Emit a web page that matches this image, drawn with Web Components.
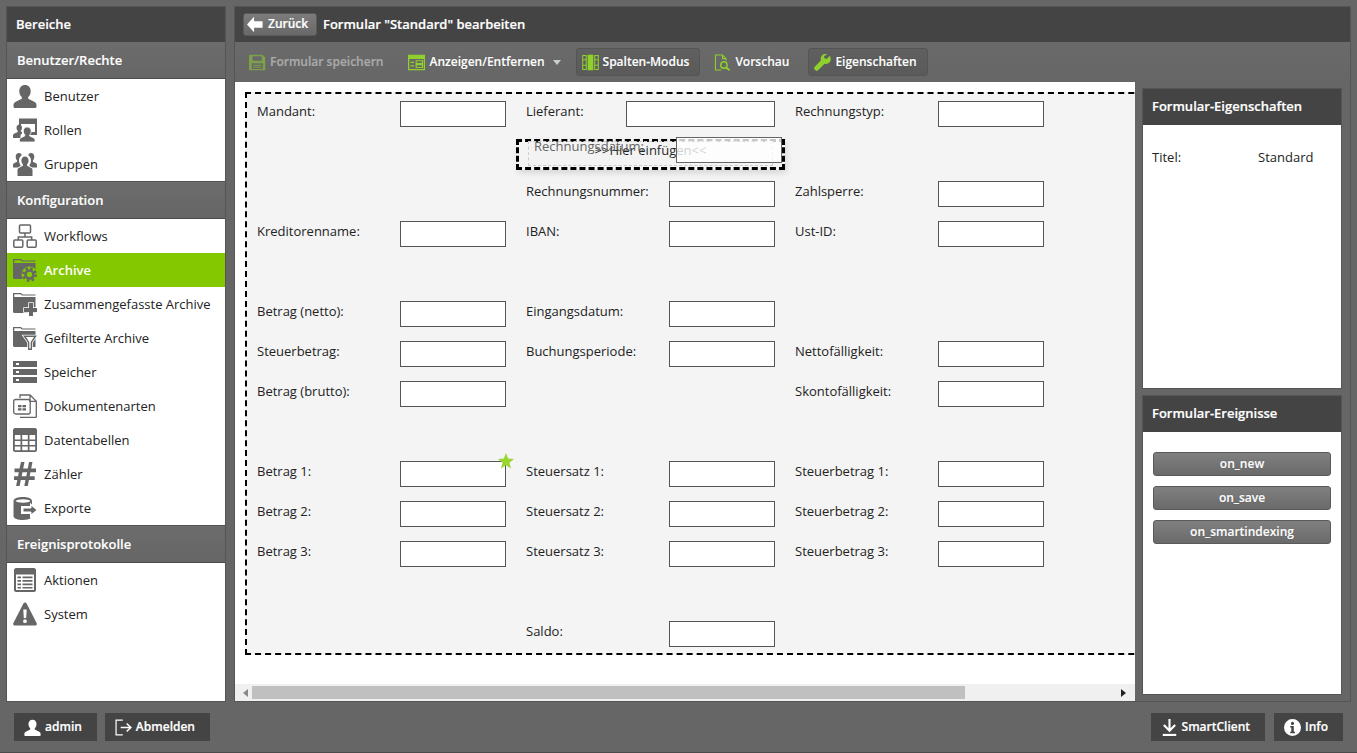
<!DOCTYPE html>
<html lang="de">
<head>
<meta charset="utf-8">
<title>Formular bearbeiten</title>
<style>
html,body{margin:0;height:100%;overflow:hidden;background:#666;font:13px/18px "Open Sans","Liberation Sans",sans-serif;color:#222}
</style>
</head>
<body>
<app-shell>
  <side-nav slot="nav">
    <nav-section title="Benutzer/Rechte">
      <nav-item icon="user">Benutzer</nav-item>
      <nav-item icon="roles">Rollen</nav-item>
      <nav-item icon="groups">Gruppen</nav-item>
    </nav-section>
    <nav-section title="Konfiguration">
      <nav-item icon="workflow">Workflows</nav-item>
      <nav-item icon="foldergear" active>Archive</nav-item>
      <nav-item icon="folderplus">Zusammengefasste Archive</nav-item>
      <nav-item icon="folderfilter">Gefilterte Archive</nav-item>
      <nav-item icon="storage">Speicher</nav-item>
      <nav-item icon="doctypes">Dokumentenarten</nav-item>
      <nav-item icon="table">Datentabellen</nav-item>
      <nav-item icon="hash">Zähler</nav-item>
      <nav-item icon="export">Exporte</nav-item>
    </nav-section>
    <nav-section title="Ereignisprotokolle" grow>
      <nav-item icon="list">Aktionen</nav-item>
      <nav-item icon="warning">System</nav-item>
    </nav-section>
  </side-nav>

  <title-bar slot="title">Formular "Standard" bearbeiten</title-bar>

  <tool-bar slot="tools">
    <tool-button icon="save" disabled>Formular speichern</tool-button>
    <tool-button icon="showhide" caret>Anzeigen/Entfernen</tool-button>
    <tool-button icon="columns" pressed>Spalten-Modus</tool-button>
    <tool-button icon="preview">Vorschau</tool-button>
    <tool-button icon="wrench" pressed>Eigenschaften</tool-button>
  </tool-bar>

  <scroll-canvas slot="canvas">
    <form-grid>
      <form-field col="1" row="1" label="Mandant:"></form-field>
      <form-field col="2" row="1" label="Lieferant:" wide></form-field>
      <form-field col="3" row="1" label="Rechnungstyp:"></form-field>
      <drop-zone col="2" row="2"></drop-zone>
      <form-field col="2" row="3" label="Rechnungsnummer:"></form-field>
      <form-field col="3" row="3" label="Zahlsperre:"></form-field>
      <form-field col="1" row="4" label="Kreditorenname:"></form-field>
      <form-field col="2" row="4" label="IBAN:"></form-field>
      <form-field col="3" row="4" label="Ust-ID:"></form-field>
      <form-field col="1" row="6" label="Betrag (netto):"></form-field>
      <form-field col="2" row="6" label="Eingangsdatum:"></form-field>
      <form-field col="1" row="7" label="Steuerbetrag:"></form-field>
      <form-field col="2" row="7" label="Buchungsperiode:"></form-field>
      <form-field col="3" row="7" label="Nettofälligkeit:"></form-field>
      <form-field col="1" row="8" label="Betrag (brutto):"></form-field>
      <form-field col="3" row="8" label="Skontofälligkeit:"></form-field>
      <form-field col="1" row="10" label="Betrag 1:" star></form-field>
      <form-field col="2" row="10" label="Steuersatz 1:"></form-field>
      <form-field col="3" row="10" label="Steuerbetrag 1:"></form-field>
      <form-field col="1" row="11" label="Betrag 2:"></form-field>
      <form-field col="2" row="11" label="Steuersatz 2:"></form-field>
      <form-field col="3" row="11" label="Steuerbetrag 2:"></form-field>
      <form-field col="1" row="12" label="Betrag 3:"></form-field>
      <form-field col="2" row="12" label="Steuersatz 3:"></form-field>
      <form-field col="3" row="12" label="Steuerbetrag 3:"></form-field>
      <form-field col="2" row="14" label="Saldo:"></form-field>
    </form-grid>
  </scroll-canvas>

  <side-panel slot="props" title="Formular-Eigenschaften">
    <prop-row name="Titel:" value="Standard"></prop-row>
  </side-panel>
  <side-panel slot="props" title="Formular-Ereignisse" buttons>
    <event-button>on_new</event-button>
    <event-button>on_save</event-button>
    <event-button>on_smartindexing</event-button>
  </side-panel>

  <foot-button slot="footl" icon="user">admin</foot-button>
  <foot-button slot="footl" icon="logout">Abmelden</foot-button>
  <foot-button slot="footr" icon="download">SmartClient</foot-button>
  <foot-button slot="footr" icon="info">Info</foot-button>
</app-shell>

<script>
const FOLDER = '<path d="M0 1h8l1.500 1.500H22.500v1H9L7.500 2.200H1.300V5h21.200v16H1.500C.6 21 0 20.400 0 19.500z"/>';
const ICONS = {
  user:'<path d="M12 1C8.400 1 6.300 3.700 6.300 7.200c0 2.500 1 4.600 2.500 5.900v1.700l-5.600 2.700C1.400 18.400.5 19.500.5 21v1.500C.5 23.400 1 24 2 24h20c1 0 1.500-.6 1.500-1.500V21c0-1.500-.9-2.600-2.700-3.500l-5.600-2.700v-1.700c1.500-1.300 2.500-3.400 2.500-5.900C17.700 3.700 15.600 1 12 1z"/>',
  roles:'<path d="M6 .5h18V17h-7.500l-1-1.500V14H22V6H8v2H6z"/><path d="M16 7.500h2.500v2H16zM19.500 7.500H22v2h-2.500zM16 10.500h2.500v2H16zM19.500 10.500H22v2h-2.500z" fill="#fff"/><path d="M6.500 6.500c-2 0-3 1.500-3 3.300 0 1.300.5 2.400 1.200 3v1.200L1 15.700C.3 16 0 16.600 0 17.300V20h7.500v-2.200c0-1 .6-1.800 1.500-2.300V14l-1.200-.5v-.7c.7-.6 1.200-1.700 1.200-3 0-1.800-1-3.300-2.500-3.300z"/><path d="M14 9c-2.300 0-3.700 1.800-3.700 4 0 1.500.6 2.900 1.500 3.700v1.200l-3.700 1.800c-1 .5-1.600 1.200-1.600 2.200V24h15.500v-2c0-1-.6-1.700-1.600-2.200l-3.700-1.800v-1.200c1-.8 1.500-2.200 1.500-3.700 0-2.200-1.400-4-3.700-4z" stroke="#fff" stroke-width=".8"/>',
  groups:'<path d="M6 1C3.900 1 2.700 2.700 2.700 4.800c0 1.500.6 2.800 1.400 3.600v1.300L1 11.300C.3 11.700 0 12.300 0 13v2.500h4.800l2.700-1.400v-1.200C6.500 11.700 6 10 6 8.500c0-2.400 1-4.200 2.800-5.300C8.300 1.900 7.300 1 6 1zM18 1c-1.300 0-2.300.9-2.800 2.200C17 4.300 18 6.100 18 8.500c0 1.500-.5 3.200-1.500 4.400v1.200l2.700 1.400H24V13c0-.7-.3-1.300-1-1.700l-3.100-1.600V8.400c.8-.8 1.400-2.100 1.400-3.600C21.300 2.700 20.100 1 18 1z"/><path d="M12 4.500c-2.300 0-3.600 1.800-3.600 4 0 1.600.6 3 1.500 3.800v1.400L5.800 16C5 16.400 4.500 17 4.500 18v6h15v-6c0-1-.5-1.600-1.300-2l-4.100-2.300v-1.400c.9-.8 1.500-2.200 1.500-3.800 0-2.200-1.300-4-3.600-4z"/>',
  workflow:'<g fill="none" stroke="currentColor" stroke-width="1.500"><rect x="6.500" y="1" width="11" height="8" rx="1"/><rect x=".8" y="16" width="9" height="7.200" rx="1"/><rect x="14.200" y="16" width="9" height="7.200" rx="1"/><path d="M12 9v4M5.300 16v-3h13.400v3"/></g>',
  foldergear: FOLDER+'<circle cx="16.500" cy="16.500" r="8" style="fill:var(--halo,#fff)"/><circle cx="16.500" cy="16.500" r="4" fill="none" stroke="currentColor" stroke-width="2.600"/><circle cx="16.500" cy="16.500" r="6.200" fill="none" stroke="currentColor" stroke-width="2.400" stroke-dasharray="2.430 2.440"/>',
  folderplus: FOLDER+'<path d="M16 11h4v5h4v4h-4v4h-4v-4h-5v-4h5z" stroke="#fff" stroke-width="1.500" paint-order="stroke"/>',
  folderfilter: FOLDER+'<path d="M10 9.500h14l-5 7v7.500h-4v-7.500z" stroke="#fff" stroke-width="1.500" paint-order="stroke"/><path d="M13 11h8l-3.300 5v6.500h-1.400V16z" fill="#fff"/>',
  storage:'<path fill-rule="evenodd" d="M0 1h24v6H0zM0 9h24v6H0zM0 17h24v6H0zM3 3v2h3V3zM3 11v2h3v-2zM3 19v2h3v-2z"/>',
  doctypes:'<g fill="none" stroke="currentColor" stroke-width="1.300"><path d="M7 4V1h10l6.300 6.300V22.500c0 .6-.4 1-1 1H7M17 1v6.300h6.300"/><rect x=".7" y="5.500" width="16.500" height="14.500" rx="2"/></g><path d="M5 11h3.500v2.200H5zM9.500 11H13v2.200H9.500zM5 14.200h3.500v2.200H5zM9.500 14.200H13v2.200H9.500z"/>',
  table:'<path fill-rule="evenodd" d="M2 0h20c1 0 2 1 2 2v20c0 1-1 2-2 2H2c-1 0-2-1-2-2V2C0 1 1 0 2 0zM1.800 7v4.500h5.700V7zM9.200 7v4.500h5.600V7zM16.500 7v4.500h5.700V7zM1.800 13v4h5.700v-4zM9.200 13v4h5.600v-4zM16.500 13v4h5.700v-4zM1.800 18.500v3.700h5.700v-3.700zM9.200 18.500v3.700h5.600v-3.700zM16.500 18.500v3.700h5.700v-3.700z"/>',
  hash:'<path fill-rule="evenodd" d="M8 0h3.500l-1.300 6.500h4.600L16 0h3.500l-1.300 6.500H23v3.700h-5.500l-.8 4h5v3.700h-5.800L14.800 24h-3.500l1.100-6.100H7.800L6.600 24H3.100l1.200-6.100H1v-3.700h4l.8-4H1.500V6.500h5zM9.500 10.200l-.8 4h4.600l.8-4z"/>',
  export:'<path d="M10 1C5 1 .5 2.300.5 5v15c0 2.700 4.500 4 9.500 4 3.500 0 6.500-.7 8-2l-1-.2V18H8v-8h9V6.800l2 1.800V5c0-2.700-4.500-4-9-4z"/><path d="M2.500 5c1-.9 4-1.700 7.500-1.700S16.500 4.100 17.500 5C16.500 5.900 13.500 6.700 10 6.700S3.500 5.900 2.500 5z" fill="#fff"/><path d="M10 12h8V9l6 5-6 5v-3h-8z" stroke="#fff" stroke-width="1"/>',
  list:'<path fill-rule="evenodd" d="M3 0h18c1 0 2 1 2 2v20c0 1-1 2-2 2H3c-1 0-2-1-2-2V2c0-1 1-2 2-2zM3 6.500V22h18V6.500zM4.500 8.500h3.500v1.800H4.500zM9.500 8.500h10v1.800h-10zM4.500 12h3.500v1.800H4.500zM9.500 12h10v1.800h-10zM4.500 15.500h3.500v1.800H4.500zM9.500 15.500h10v1.800h-10zM4.500 19h3.500v1.500H4.500zM9.500 19h10v1.500h-10z"/>',
  warning:'<path fill-rule="evenodd" d="M12 .5c.7 0 1.200.4 1.600 1.100L23.600 21c.6 1.200 0 2.500-1.400 2.500H1.800C.4 23.500-.2 22.200.4 21L10.400 1.600C10.800.9 11.300.5 12 .5zM10.300 7.500l.5 8.500h2.400l.5-8.500zM12 17.300a1.900 1.900 0 100 3.800 1.900 1.900 0 000-3.800z"/>',
  save:'<path fill-rule="evenodd" d="M1.500 1H19l4 4v16.500c0 1-.6 1.500-1.500 1.500h-20C.6 23 0 22.500 0 21.500v-19C0 1.600.6 1 1.500 1zM5 3v6.500h13V3zM4 13v8h15.500v-8z"/><path d="M6 15h11.500v1.500H6zM6 18h11.500v1.500H6z"/>',
  showhide:'<path fill-rule="evenodd" d="M0 1h24v22H0zM1.800 7v14.200h20.400V7z"/><path d="M3.500 11h5v1.800h-5zM3.500 16h5v1.800h-5z"/><path fill="none" stroke="currentColor" stroke-width="1.600" d="M11.500 9.500h9v4h-9zM11.500 15h9v4h-9z"/>',
  columns:'<path d="M8 1h8v22H8z"/><path fill="none" stroke="currentColor" stroke-width="1.500" d="M1 2h5v20H1zM18 2h5v20h-5zM1 8h5M1 16h5M18 8h5M18 16h5"/>',
  preview:'<path fill="none" stroke="currentColor" stroke-width="1.500" d="M10.500 22.500H2V1.500h10l5 5V9M12 1.500v5h5"/><circle cx="14" cy="15.500" r="4.500" fill="none" stroke="currentColor" stroke-width="2"/><path d="M17 19l5 4" stroke="currentColor" stroke-width="2.500"/>',
  wrench:'<path d="M22.500 2.500l-4.700 4.400-3-.8-.7-2.900L18.700.5c-2.600-1-5.700-.4-7.500 1.500-1.800 1.900-2.200 4.500-1.300 6.900L.8 18.200c-1 1.100-1 2.800.1 3.800l1.100 1c1.100 1 2.700 1 3.700-.1l9.200-9.300c2.400.8 5 .3 6.900-1.500 2-2 2.500-5 .7-9.600z"/>',
  back:'<path d="M10 1v6.500h12v9H10V23L0 12z"/>',
  logout:'<path fill="none" stroke="currentColor" stroke-width="1.700" d="M11 1.500H1.500v21H11"/><path fill="none" stroke="currentColor" stroke-width="2" d="M8 12h14M16.500 6.500L22.500 12l-6 5.500"/>',
  download:'<path fill="none" stroke="currentColor" stroke-width="3" d="M12 0v16M4 8.500l8 8 8-8"/><path d="M2.500 21h19v3h-19z"/>',
  info:'<path fill-rule="evenodd" d="M12 0a12 12 0 110 24 12 12 0 010-24zM12 4a2.200 2.200 0 100 4.400A2.200 2.200 0 0012 4zM8.800 10v2h1.500v6H8.800v2h6.700v-2h-1.700v-8z"/>',
};

function define(name, css, html, init){
  customElements.define(name, class extends HTMLElement{
    constructor(){
      super();
      this.attachShadow({mode:'open'});
    }
    connectedCallback(){
      const h = typeof html==='function' ? html(this) : html;
      this.shadowRoot.innerHTML = `<style>${css}</style>${h}`;
      if(init) init(this);
    }
  });
}
const svg = (n,w,h)=>`<svg viewBox="0 0 24 24" width="${w}" height="${h||w}" fill="currentColor" aria-hidden="true">${ICONS[n]}</svg>`;
const place = el => { el.style.gridColumn = el.getAttribute('col'); el.style.gridRow = el.getAttribute('row'); };

define('app-shell',`
  :host{display:grid;grid-template-columns:220px 1117px;grid-template-rows:36px 40px 620px 1fr;column-gap:8px;
    height:753px;box-sizing:border-box;padding:6px 6px 0 6px;border-bottom:1px solid #4a4a4a;grid-template-areas:"nav title" "nav tools" "nav body" "foot foot"}
  .nav{grid-area:nav;display:flex}
  .title{grid-area:title;display:flex}
  .tools{grid-area:tools;display:flex}
  .body{grid-area:body;display:flex;border:1px solid #555;border-top:0}
  .canvas{flex:0 0 900px;display:flex;min-width:0}
  .props{flex:1;display:flex;flex-direction:column;gap:6px;padding:6px 8px 6px 7px;box-sizing:border-box}
  .foot{grid-area:foot;display:flex;justify-content:space-between;padding:11px 14px 11px 8px;margin-right:-6px;align-items:flex-start;box-sizing:border-box}
  .grp{display:flex;gap:8px}
  .grp.r{gap:9px}
`,`
  <div class="nav"><slot name="nav"></slot></div>
  <div class="title"><slot name="title"></slot></div>
  <div class="tools"><slot name="tools"></slot></div>
  <div class="body">
    <div class="canvas"><slot name="canvas"></slot></div>
    <div class="props"><slot name="props"></slot></div>
  </div>
  <div class="foot">
    <div class="grp"><slot name="footl"></slot></div>
    <div class="grp r"><slot name="footr"></slot></div>
  </div>
`);

define('side-nav',`
  :host{display:flex;flex-direction:column;width:220px;height:696px;box-sizing:border-box;border:1px solid #555}
  .h{height:35px;flex:none;background:#444;color:#fff;font-weight:600;font-size:13px;line-height:35px;padding-left:9px;box-sizing:border-box;-webkit-text-stroke:.2px #fff}
`,`<div class="h">Bereiche</div><slot></slot>`);

define('nav-section',`
  :host{display:flex;flex-direction:column}
  :host([grow]){flex:1}
  .h{height:37px;flex:none;box-sizing:border-box;background:linear-gradient(#6c6c6c,#666);border-bottom:1px solid #4d4d4d;color:#fff;font-weight:600;font-size:13px;line-height:36px;padding-left:10px;text-shadow:0 0 1px rgba(0,0,0,.3);-webkit-text-stroke:.2px #fff}
  .b{background:#fff;flex:1;border-bottom:1px solid #555}
  :host([grow]) .b{border-bottom:0}
`,el=>`<div class="h">${el.getAttribute('title')}</div><div class="b"><slot></slot></div>`, el=>el.removeAttribute('title'));

define('nav-item',`
  :host{display:flex;align-items:center;height:34px;color:#222;font-size:13px;padding-left:6px;gap:7px;box-sizing:border-box}
  :host([active]){background:#84c800;color:#fff;font-weight:600;--halo:#84c800}
  svg{color:#666;flex:none;display:block}
`,el=>`${svg(el.getAttribute('icon'),24)}<span><slot></slot></span>`);

define('title-bar',`
  :host{display:flex;flex:1;align-items:center;height:36px;box-sizing:border-box;background:#444;border:1px solid #555;border-bottom:0;padding:0 0 1px 8px;gap:6px;color:#fff;font-weight:600;font-size:13px;-webkit-text-stroke:.2px #fff}
  .back{display:flex;align-items:center;width:74px;height:23px;box-sizing:border-box;border:1px solid #5a5a5a;border-radius:3px;background:linear-gradient(#7c7c7c,#686868);padding-left:3px;gap:4px;font-size:12px}
  .back svg{display:block}
`,el=>`<div class="back">${svg('back',17)}<span>Zurück</span></div><span><slot></slot></span>`);

define('tool-bar',`
  :host{display:flex;flex:1;align-items:center;height:40px;box-sizing:border-box;background:linear-gradient(#6a6a6a,#666);padding:0 0 0 8px;gap:8px;border-left:1px solid #555;border-right:1px solid #555}
`,`<slot></slot>`);

define('tool-button',`
  :host{display:flex;align-items:center;height:28px;box-sizing:border-box;border:1px solid transparent;border-radius:3px;padding:0 10px 0 5px;gap:4px;color:#fff;font-weight:600;font-size:12px;white-space:nowrap;text-shadow:0 0 1px rgba(0,0,0,.5);-webkit-text-stroke:.2px #fff}
  :host([pressed]){background:linear-gradient(#606060,#5a5a5a);border-color:#555}
  :host([disabled]){color:#aaa;text-shadow:none;-webkit-text-stroke:.2px #aaa}
  svg{color:#8fd02c;display:block;flex:none}
  :host([disabled]) svg{color:#7da04a}
  .caret{width:0;height:0;border:4px solid transparent;border-top:5px solid #ccc;border-bottom:0;margin:1px -4px 0 4px}
`,el=>`${svg(el.getAttribute('icon'),17)}<span><slot></slot></span>${el.hasAttribute('caret')?'<i class="caret"></i>':''}`);

define('scroll-canvas',`
  :host{display:flex;flex-direction:column;flex:1;background:#fff;min-width:0}
  .view{flex:1;overflow:hidden;padding:10px 0 0 10px;min-height:0}
  .bar{flex:none;height:17px;background:#f0f0f0;display:flex;align-items:center;box-sizing:border-box;padding:1px 0 1px 8px}
  .a{width:0;height:0;border:4px solid transparent;flex:none}
  .l{border-right:5px solid #888;border-left:0}
  .r{border-left:5px solid #222;border-right:0;margin:0 9px 0 auto}
  .t{width:713px;height:13px;background:#c0c0c0;margin-left:4px}
`,`<div class="view"><slot></slot></div><div class="bar"><i class="a l"></i><i class="t"></i><i class="a r"></i></div>`);

define('form-grid',`
  :host{display:grid;width:1090px;box-sizing:border-box;height:563px;border:2px dashed #000;background:#f4f4f4;
    padding:7px 0 0 10px;grid-template-columns:repeat(3,249px);column-gap:20px;grid-template-rows:repeat(14,26px);row-gap:14px;position:relative}
`,`<slot></slot>`);

define('form-field',`
  :host{display:flex;justify-content:space-between;position:relative;color:#222;font-size:13px}
  label{line-height:20px}
  .i{width:106px;height:26px;box-sizing:border-box;border:1px solid #555;background:#fff;flex:none}
  :host([wide]) .i{width:149px}
  svg{position:absolute;right:-8px;top:-8px;display:block}
`,el=>`<label>${el.getAttribute('label')}</label><div class="i"></div>${el.hasAttribute('star')?'<svg width="16" height="16" viewBox="0 0 17 17"><path fill="#9ad62f" d="M8.500 0l2.300 5.900 6.200.4-4.800 4 1.600 6.200-5.300-3.400-5.300 3.400 1.600-6.200L0 6.300l6.200-.4z"/></svg>':''}`, place);

define('drop-zone',`
  :host{display:flex;align-items:center;justify-content:center;position:relative;margin:-2px -10px -3px -10px;border:3px dashed #000;box-sizing:border-box;color:#000;font-size:13px;line-height:20px;box-shadow:2px 3px 6px rgba(0,0,0,.12)}
  .txt{position:relative;top:-5px;left:0}
  .ghost{position:absolute;left:9px;top:-1px;width:245px;height:25px;box-sizing:border-box;border:1px dashed #ccc;background:rgba(244,244,244,.15)}
  .ghost span{position:absolute;left:5px;top:-6px;color:#666;line-height:20px;white-space:nowrap}
  .gi{position:absolute;left:147px;top:-5px;width:106px;height:26px;box-sizing:border-box;border:1px solid #666;background:rgba(255,255,255,.78)}
`,`<span class="txt">&gt;&gt;Hier einfügen&lt;&lt;</span><div class="ghost"><span>Rechnungsdatum:</span><div class="gi"></div></div>`, place);

define('side-panel',`
  :host{display:flex;flex-direction:column;border:1px solid #555;flex:301 1 0;min-height:0;background:#fff}
  :host([buttons]){flex:300 1 0}
  .h{height:36px;flex:none;background:#444;color:#fff;font-weight:600;font-size:13px;line-height:35px;padding-left:9px;-webkit-text-stroke:.2px #fff}
  .b{flex:1;padding:23px 9px}
  :host([buttons]) .b{padding:20px 10px;display:flex;flex-direction:column;gap:10px}
`,el=>`<div class="h">${el.getAttribute('title')}</div><div class="b"><slot></slot></div>`, el=>el.removeAttribute('title'));

define('prop-row',`
  :host{display:flex;font-size:13px;color:#222}
  .n{width:106px;flex:none}
`,el=>`<span class="n">${el.getAttribute('name')}</span><span>${el.getAttribute('value')}</span>`);

define('event-button',`
  :host{display:flex;align-items:center;justify-content:center;height:24px;box-sizing:border-box;border:1px solid #5a5a5a;border-radius:3px;background:linear-gradient(#808080,#6a6a6a);color:#fff;font-weight:600;font-size:12px;text-shadow:0 0 1px rgba(0,0,0,.5);-webkit-text-stroke:.2px #fff}
`,`<slot></slot>`);

define('foot-button',`
  :host{display:flex;align-items:center;height:28px;box-sizing:border-box;background:#444;color:#fff;font-weight:600;font-size:12px;padding:0 15px 0 10px;gap:4px;-webkit-text-stroke:.2px #fff}
  svg{display:block;flex:none}
`,el=>`${svg(el.getAttribute('icon'),17)}<span><slot></slot></span>`);
</script>
</body>
</html>
